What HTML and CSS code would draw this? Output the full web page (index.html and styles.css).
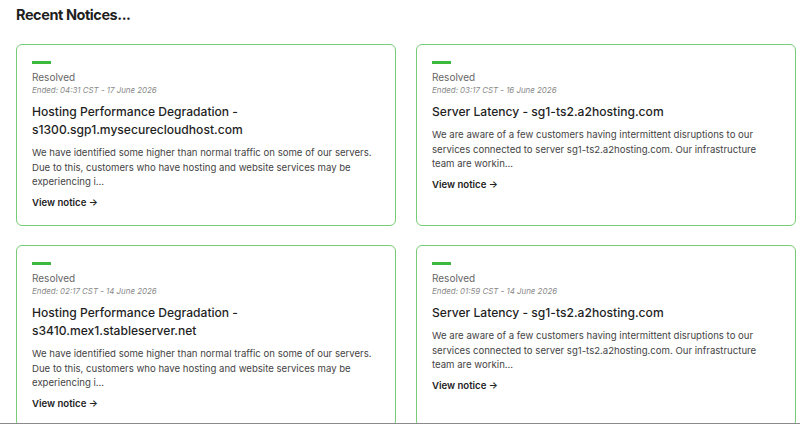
FILE: index.html
```html
<!DOCTYPE html>
<html>
<head>
<meta charset="utf-8">
<link rel="stylesheet" href="styles.css">
</head>
<body>
<div class="page">
  <h2 class="heading">Recent Notices...</h2>
  <div class="grid">
    <div class="card">
      <div class="bar"></div>
      <div class="status">Resolved</div>
      <div class="ended">Ended: 04:31 CST - 17 June 2026</div>
      <h3 class="title">Hosting Performance Degradation - s1300.sgp1.mysecurecloudhost.com</h3>
      <p class="desc">We have identified some higher than normal traffic on some of our servers. Due to this, customers who have hosting and website services may be experiencing i...</p>
      <a class="link" href="#">View notice →</a>
    </div>
    <div class="card">
      <div class="bar"></div>
      <div class="status">Resolved</div>
      <div class="ended">Ended: 03:17 CST - 16 June 2026</div>
      <h3 class="title">Server Latency - sg1-ts2.a2hosting.com</h3>
      <p class="desc">We are aware of a few customers having intermittent disruptions to our services connected to server sg1-ts2.a2hosting.com. Our infrastructure team are workin...</p>
      <a class="link" href="#">View notice →</a>
    </div>
    <div class="card">
      <div class="bar"></div>
      <div class="status">Resolved</div>
      <div class="ended">Ended: 02:17 CST - 14 June 2026</div>
      <h3 class="title">Hosting Performance Degradation - s3410.mex1.stableserver.net</h3>
      <p class="desc">We have identified some higher than normal traffic on some of our servers. Due to this, customers who have hosting and website services may be experiencing i...</p>
      <a class="link" href="#">View notice →</a>
    </div>
    <div class="card">
      <div class="bar"></div>
      <div class="status">Resolved</div>
      <div class="ended">Ended: 01:59 CST - 14 June 2026</div>
      <h3 class="title">Server Latency - sg1-ts2.a2hosting.com</h3>
      <p class="desc">We are aware of a few customers having intermittent disruptions to our services connected to server sg1-ts2.a2hosting.com. Our infrastructure team are workin...</p>
      <a class="link" href="#">View notice →</a>
    </div>
  </div>
</div>
</body>
</html>
```

FILE: styles.css
```css
html, body {
  margin: 0;
  padding: 0;
  background: #fff;
}
body {
  font-family: Inter, "Noto Sans", sans-serif;
  color: #222;
}
.page {
  height: 423px;
  overflow: hidden;
  border-bottom: 1px solid #8a8a8a;
  padding: 0 4px 0 16px;
}
.heading {
  margin: 0;
  padding-top: 5px;
  height: 44px;
  box-sizing: border-box;
  font-size: 14.5px;
  line-height: 20px;
  font-weight: 700;
  letter-spacing: -0.03em;
  color: #1f1f1f;
}
.grid {
  display: grid;
  grid-template-columns: 1fr 1fr;
  column-gap: 20px;
  row-gap: 19px;
}
.card {
  border: 1px solid #77cc77;
  border-radius: 6px;
  padding: 16px 15px 15.5px 15px;
  box-sizing: border-box;
}
.bar {
  width: 19px;
  height: 3px;
  background: #3db93d;
  margin-bottom: 6px;
}
.status {
  font-size: 10px;
  line-height: 14px;
  color: #666;
}
.ended {
  font-size: 7.9px;
  line-height: 13px;
  font-style: italic;
  color: #8a8a8a;
}
.title {
  margin: 6px 0 0 0;
  font-size: 12.1px;
  line-height: 18px;
  font-weight: 500;
  color: #1f1f1f;
}
.desc {
  margin: 7px 0 0 0;
  font-size: 9.6px;
  line-height: 14.5px;
  color: #444;
}
.link {
  display: inline-block;
  margin-top: 6px;
  font-size: 9.6px;
  line-height: 14px;
  font-weight: 600;
  color: #222;
  text-decoration: none;
}
```
